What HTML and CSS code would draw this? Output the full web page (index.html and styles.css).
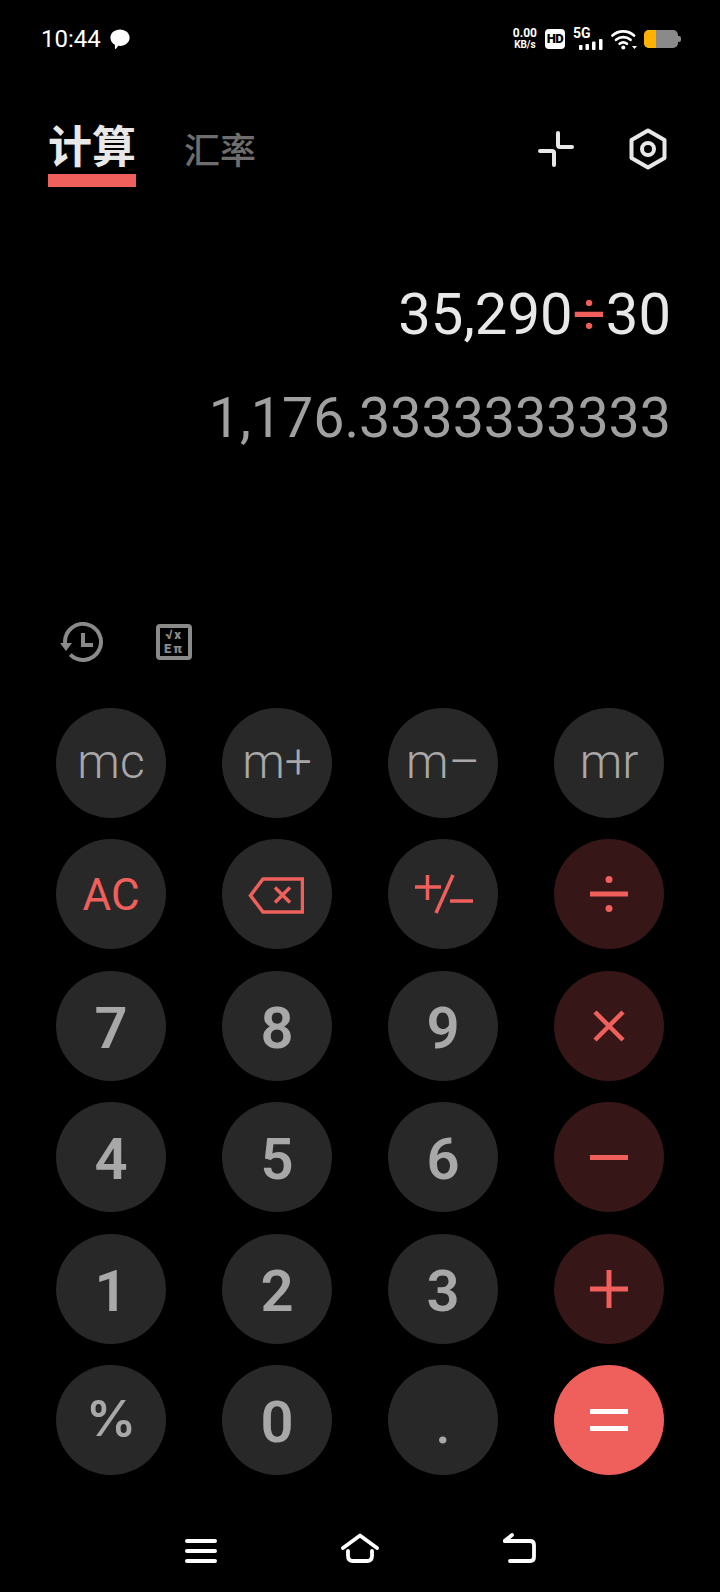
FILE: index.html
```html
<!DOCTYPE html>
<html lang="zh-CN">
<head>
    <meta charset="UTF-8">
    <meta name="viewport" content="width=device-width, initial-scale=1.0">
    <title>计算器</title>
    <link rel="stylesheet" href="styles.css">
</head>
<body>
    <div class="phone">
        <!-- Status Bar -->
        <div class="status-bar">
            <div class="status-left">
                <span class="clock">10:44</span>
                <svg class="msg-icon" width="22" height="22" viewBox="0 0 22 22"><path fill="#fff" d="M11 1.500c5.400 0 9.600 3.600 9.600 8.200 0 4.600-4.200 8.200-9.600 8.200-.6 0-1.200 0-1.800-.1L7 20.700c-.5.400-1.100.1-1.100-.5v-3.500C3.100 15.200 1.400 12.600 1.400 9.700 1.400 5.100 5.600 1.500 11 1.500z"/></svg>
            </div>
            <div class="status-right">
                <div class="net-speed"><span class="net-num">0.00</span><span class="net-unit">KB/s</span></div>
                <span class="hd-badge">HD</span>
                <div class="signal">
                    <span class="signal-label">5G</span>
                    <svg class="signal-bars" width="24" height="11" viewBox="0 0 24 11" fill="#fff"><rect x="0" y="6" width="3.500" height="5" rx="1"/><rect x="6.500" y="5" width="3.500" height="6" rx="1"/><rect x="13" y="2.500" width="3.500" height="8.500" rx="1"/><rect x="20" y="0" width="3.500" height="11" rx="1"/></svg>
                </div>
                <svg class="wifi-icon" width="26" height="21" viewBox="0 0 26 21" fill="none" stroke="#fff" stroke-width="2.600" stroke-linecap="round"><path d="M1.500 6.500C7.500 1 17 1 23 6.500"/><path d="M5 10.800c4.300-3.600 10.300-3.600 14.600 0"/><path d="M8.600 14.800c2.200-1.700 5.200-1.700 7.400 0"/><circle cx="12.300" cy="18.500" r="2" fill="#fff" stroke="none"/><path d="M21 17h5l-2.500 3z" fill="#fff" stroke="none"/></svg>
                <div class="battery"><div class="battery-fill"></div></div>
            </div>
        </div>

        <!-- Tabs -->
        <header class="top-bar">
            <nav class="tabs">
                <a href="#" class="tab active">计算</a>
                <a href="#" class="tab">汇率</a>
            </nav>
            <div class="top-actions">
                <svg width="38" height="38" viewBox="0 0 38 38" fill="none" stroke="#e8e8e8" stroke-width="4" stroke-linecap="round" stroke-linejoin="round"><path d="M21 3v12q0 2 2 2h12"/><path d="M3 21h12q2 0 2 2v12"/></svg>
                <svg width="38" height="42" viewBox="0 0 38 42" fill="none" stroke="#e8e8e8" stroke-width="4" stroke-linejoin="round"><path d="M19 2.500l16.500 9.500v18L19 39.500 2.500 30V12z"/><circle cx="19" cy="21" r="6"/></svg>
            </div>
        </header>

        <!-- Display -->
        <section class="display">
            <div class="expression">35,290<span class="op">÷</span>30</div>
            <div class="result">1,176.3333333333</div>
        </section>

        <!-- Tools -->
        <div class="tools">
            <svg width="44" height="42" viewBox="0 0 44 42" fill="none" stroke="#8a8a8a" stroke-width="4"><path d="M5 21A18 18 0 1 1 10.300 32.700"/><path d="M0 21h12L6 29z" fill="#8a8a8a" stroke="none"/><path d="M23 11v12h10"/></svg>
            <div class="sci-icon"><span>√x</span><span>Eπ</span></div>
        </div>

        <!-- Keypad -->
        <section class="keypad">
            <button class="key mem">mc</button>
            <button class="key mem">m+</button>
            <button class="key mem">m–</button>
            <button class="key mem">mr</button>

            <button class="key red-text">AC</button>
            <button class="key icon-back">
                <svg width="56" height="37" viewBox="0 0 56 37" fill="none" stroke="#ef5f5b" stroke-width="3.500"><path d="M54.500 2H15L2.500 18.500 15 35h39.500z"/><path d="M27 10.500l15 15M42 10.500l-15 15"/></svg>
            </button>
            <button class="key">
                <svg width="60" height="40" viewBox="0 0 60 40" fill="none" stroke="#ef5f5b" stroke-width="3.500"><path d="M2 13h26M14.500 1v25"/><path d="M40 1L23 39"/><path d="M37 27h23"/></svg>
            </button>
            <button class="key op-key">
                <svg width="38" height="36" viewBox="0 0 38 36" fill="#ef5f5b"><circle cx="19" cy="3.500" r="3.500"/><rect x="0" y="15.500" width="38" height="5"/><circle cx="19" cy="32.500" r="3.500"/></svg>
            </button>

            <button class="key digit">7</button>
            <button class="key digit">8</button>
            <button class="key digit">9</button>
            <button class="key op-key">
                <svg width="34" height="34" viewBox="0 0 34 34" stroke="#ef5f5b" stroke-width="4.500"><path d="M3 3l28 28M31 3L3 31"/></svg>
            </button>

            <button class="key digit">4</button>
            <button class="key digit">5</button>
            <button class="key digit">6</button>
            <button class="key op-key">
                <svg width="38" height="5" viewBox="0 0 38 5" fill="#ef5f5b"><rect width="38" height="5"/></svg>
            </button>

            <button class="key digit">1</button>
            <button class="key digit">2</button>
            <button class="key digit">3</button>
            <button class="key op-key">
                <svg width="38" height="38" viewBox="0 0 38 38" fill="#ef5f5b"><rect y="16.500" width="38" height="5"/><rect x="16.500" width="5" height="38"/></svg>
            </button>

            <button class="key percent">%</button>
            <button class="key digit">0</button>
            <button class="key dot-key">.</button>
            <button class="key equals">
                <svg width="38" height="22" viewBox="0 0 38 22" fill="#fff"><rect width="38" height="5"/><rect y="17" width="38" height="5"/></svg>
            </button>
        </section>

        <!-- Navigation Bar -->
        <footer class="nav-bar">
            <svg class="nav-menu" width="32" height="26" viewBox="0 0 32 26" fill="none" stroke="#fff" stroke-width="4" stroke-linecap="round"><path d="M2 3h28M2 13h28M2 23h28"/></svg>
            <svg width="38" height="30" viewBox="0 0 38 30" fill="none" stroke="#fff" stroke-width="3.800" stroke-linecap="round" stroke-linejoin="round"><path d="M2 15L19 2.500 36 15"/><path d="M7 18v5q0 5 5 5h14q5 0 5-5v-5"/></svg>
            <svg width="33" height="30" viewBox="0 0 33 30" fill="none" stroke="#fff" stroke-width="3.800" stroke-linecap="round" stroke-linejoin="round"><path d="M9 2L1.500 8H27q4 0 4 4v12q0 4-4 4H7"/></svg>
        </footer>
    </div>
</body>
</html>
```

FILE: styles.css
```css
/* General */
* {
    box-sizing: border-box;
}

body {
    margin: 0;
    background-color: #000;
    font-family: 'Roboto', 'Noto Sans CJK SC', sans-serif;
    color: #e8e8e8;
}

.phone {
    width: 720px;
    height: 1592px;
    overflow: hidden;
    display: flex;
    flex-direction: column;
}

/* Status Bar */
.status-bar {
    height: 78px;
    padding: 0 39px 0 41px;
    display: flex;
    justify-content: space-between;
    align-items: center;
}

.status-left {
    display: flex;
    align-items: center;
    gap: 8px;
}

.clock {
    font-size: 24px;
    color: #fff;
}

.status-right {
    display: flex;
    align-items: center;
}

.net-speed {
    display: flex;
    flex-direction: column;
    align-items: center;
    font-weight: 700;
    color: #fff;
    line-height: 11px;
    margin-right: 8px;
}

.net-num {
    font-size: 12px;
}

.net-unit {
    font-size: 10px;
}

.hd-badge {
    width: 20px;
    height: 20px;
    background-color: #fff;
    color: #000;
    border-radius: 4px;
    font-size: 13px;
    font-weight: 900;
    line-height: 20px;
    text-align: center;
    letter-spacing: -0.5px;
    margin-right: 8px;
}

.signal {
    width: 30px;
    height: 22px;
    position: relative;
    margin-right: 8px;
}

.signal-label {
    position: absolute;
    top: -3px;
    left: 0;
    font-size: 14px;
    font-weight: 700;
    color: #fff;
}

.signal-bars {
    position: absolute;
    right: 0;
    bottom: 0;
}

.wifi-icon {
    margin-right: 7px;
}

.battery {
    width: 34px;
    height: 18px;
    margin-right: 3px;
    border-radius: 5px;
    background-color: #8a8a8a;
    position: relative;
}

.battery::after {
    content: "";
    position: absolute;
    right: -3px;
    top: 6px;
    width: 3px;
    height: 6px;
    border-radius: 0 2px 2px 0;
    background-color: #8a8a8a;
}

.battery-fill {
    width: 12px;
    height: 100%;
    border-radius: 5px 0 0 5px;
    background-color: #ffb300;
}

/* Tabs */
.top-bar {
    height: 114px;
    padding: 44px 48px 0 48px;
    display: flex;
    justify-content: space-between;
    align-items: flex-start;
}

.tabs {
    display: flex;
    align-items: flex-start;
    gap: 48px;
}

.tab {
    text-decoration: none;
    font-size: 36px;
    font-weight: 500;
    line-height: 44px;
    color: #6e6e6e;
    margin-top: 8px;
}

.tab.active {
    font-size: 44px;
    font-weight: 700;
    line-height: 52px;
    color: #e8e8e8;
    margin-top: 0;
    border-bottom: 13px solid #ef5f5b;
}

.top-actions {
    display: flex;
    align-items: center;
    gap: 54px;
    margin: 6px 5px 0 0;
}

/* Display */
.display {
    height: 430px;
    padding: 87px 49px 0 0;
    text-align: right;
}

.expression {
    font-size: 58px;
    line-height: 70px;
    color: #e8e8e8;
}

.op {
    color: #ef5f5b;
}

.result {
    font-size: 55.5px;
    line-height: 70px;
    margin-top: 35px;
    color: #a0a0a0;
}

/* Tools */
.tools {
    height: 86px;
    padding-left: 60px;
    display: flex;
    align-items: flex-start;
    gap: 52px;
}

.sci-icon {
    width: 36px;
    height: 36px;
    margin-top: 2px;
    border: 4px solid #8a8a8a;
    border-radius: 4px;
    display: flex;
    flex-direction: column;
    align-items: center;
    justify-content: center;
    font-size: 13px;
    font-weight: 900;
    line-height: 14px;
    letter-spacing: 2px;
    color: #8a8a8a;
}

/* Keypad */
.keypad {
    padding-left: 56px;
    display: grid;
    grid-template-columns: repeat(4, 110px);
    grid-auto-rows: 110px;
    column-gap: 56px;
    row-gap: 21.4px;
}

.key {
    width: 110px;
    height: 110px;
    padding: 0;
    border: none;
    border-radius: 50%;
    background-color: #282828;
    color: #a8a8a8;
    font-family: inherit;
    display: flex;
    align-items: center;
    justify-content: center;
}

.mem {
    font-size: 48px;
    font-weight: 300;
    padding-bottom: 3px;
}

.red-text {
    font-size: 44px;
    padding-top: 2px;
    color: #ef5f5b;
}

.icon-back {
    padding: 2px 2px 0 0;
}

.digit {
    font-size: 58px;
    font-weight: 600;
    padding-top: 4px;
}

.percent {
    font-family: 'Inter', sans-serif;
    font-size: 50px;
    font-weight: 600;
    padding-bottom: 3px;
}

.dot-key {
    font-size: 54px;
    font-weight: 500;
    padding-top: 9px;
}

.op-key {
    background-color: #361616;
}

.equals {
    background-color: #ef5f5b;
}

/* Navigation Bar */
.nav-bar {
    flex: 1;
    padding: 58px 0 0 185px;
    display: flex;
    align-items: flex-start;
    gap: 124px;
}

.nav-menu {
    margin-top: 5px;
}
```
